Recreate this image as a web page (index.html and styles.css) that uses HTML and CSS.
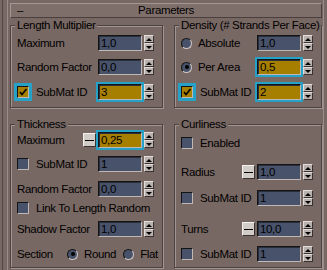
FILE: index.html
```html
<!DOCTYPE html>
<html lang="en">
<head>
  <meta charset="UTF-8" />
  <meta name="viewport" content="width=device-width, initial-scale=1.0"/>
  <title>Parameters</title>
  <link rel="stylesheet" href="styles.css">
</head>
<body>
  <div class="panel">
    <div class="rollout">
      <div class="rollout-head">
        <span class="toggle">–</span>
        <span class="title">Parameters</span>
      </div>

      <div class="groups">
        <!-- Length Multiplier -->
        <div class="group">
          <span class="legend">Length Multiplier</span>
          <div class="row">
            <span class="label">Maximum</span>
            <div class="spin"><span class="field">1,0</span><span class="arrows"><i class="up"></i><i class="down"></i></span></div>
          </div>
          <div class="row sp8">
            <span class="label">Random Factor</span>
            <div class="spin"><span class="field">0,0</span><span class="arrows"><i class="up"></i><i class="down"></i></span></div>
          </div>
          <div class="row sp9">
            <span class="label"><span class="check on active"><svg viewBox="0 0 10 10"><polyline points="2,5 4,7.5 8.5,2"/></svg></span>SubMat ID</span>
            <div class="spin"><span class="field on active">3</span><span class="arrows"><i class="up"></i><i class="down"></i></span></div>
          </div>
        </div>

        <!-- Density -->
        <div class="group right">
          <span class="legend">Density (# Strands Per Face)</span>
          <div class="row">
            <span class="label"><span class="radio"></span>Absolute</span>
            <div class="spin"><span class="field">1,0</span><span class="arrows"><i class="up"></i><i class="down"></i></span></div>
          </div>
          <div class="row sp8">
            <span class="label"><span class="radio on"></span>Per Area</span>
            <div class="spin"><span class="field on active">0,5</span><span class="arrows"><i class="up"></i><i class="down"></i></span></div>
          </div>
          <div class="row sp9">
            <span class="label"><span class="check on active"><svg viewBox="0 0 10 10"><polyline points="2,5 4,7.5 8.5,2"/></svg></span>SubMat ID</span>
            <div class="spin"><span class="field on active">2</span><span class="arrows"><i class="up"></i><i class="down"></i></span></div>
          </div>
        </div>

        <!-- Thickness -->
        <div class="group thick">
          <span class="legend">Thickness</span>
          <div class="row">
            <span class="label">Maximum</span>
            <div class="spin"><span class="minus"></span><span class="field on active">0,25</span><span class="arrows"><i class="up"></i><i class="down"></i></span></div>
          </div>
          <div class="row sp8">
            <span class="label"><span class="check"></span>SubMat ID</span>
            <div class="spin"><span class="field">1</span><span class="arrows"><i class="up"></i><i class="down"></i></span></div>
          </div>
          <div class="row sp9">
            <span class="label">Random Factor</span>
            <div class="spin"><span class="field">0,0</span><span class="arrows"><i class="up"></i><i class="down"></i></span></div>
          </div>
          <div class="row sp3">
            <span class="label"><span class="check"></span>Link To Length Random</span>
          </div>
          <div class="row sp5">
            <span class="label">Shadow Factor</span>
            <div class="spin"><span class="field">1,0</span><span class="arrows"><i class="up"></i><i class="down"></i></span></div>
          </div>
          <div class="row sp9 section">
            <span class="label">Section</span>
            <span class="option"><span class="radio on"></span>Round</span>
            <span class="option"><span class="radio"></span>Flat</span>
          </div>
        </div>

        <!-- Curliness -->
        <div class="group right curl">
          <span class="legend">Curliness</span>
          <div class="row">
            <span class="label"><span class="check"></span>Enabled</span>
          </div>
          <div class="row sp13">
            <span class="label">Radius</span>
            <div class="spin"><span class="minus"></span><span class="field">1,0</span><span class="arrows"><i class="up"></i><i class="down"></i></span></div>
          </div>
          <div class="row sp10">
            <span class="label"><span class="check"></span>SubMat ID</span>
            <div class="spin"><span class="field">1</span><span class="arrows"><i class="up"></i><i class="down"></i></span></div>
          </div>
          <div class="row sp15">
            <span class="label">Turns</span>
            <div class="spin"><span class="minus"></span><span class="field">10,0</span><span class="arrows"><i class="up"></i><i class="down"></i></span></div>
          </div>
          <div class="row sp9">
            <span class="label"><span class="check"></span>SubMat ID</span>
            <div class="spin"><span class="field">1</span><span class="arrows"><i class="up"></i><i class="down"></i></span></div>
          </div>
        </div>
      </div>
    </div>
  </div>
</body>
</html>
```

FILE: styles.css
```css
body {
  margin: 0;
  background: #786864;
  font-family: "Liberation Sans", Arial, sans-serif;
  font-size: 11.5px;
  letter-spacing: -0.35px;
  color: #000;
}

.panel {
  height: 270px;
  margin-left: 2px;
  padding-left: 4px;
  border-left: 1px solid #544845;
  box-sizing: border-box;
}

.rollout {
  width: 317px;
  height: 270px;
  box-sizing: border-box;
  padding: 3px 1px 0 2px;
  border-left: 1px solid #9a8c88;
  border-right: 1px solid #9a8c88;
}

.rollout-head {
  height: 15px;
  box-sizing: border-box;
  display: grid;
  grid-template-columns: 1fr auto 1fr;
  align-items: center;
  background: #7f6f6b;
  border: 1px solid;
  border-color: #a49692 #4a3f3c #4a3f3c #a49692;
  line-height: 13px;
}

.toggle {
  padding-left: 6px;
}

.groups {
  display: grid;
  grid-template-columns: 153px 148px;
  grid-template-rows: 83px 144px;
  column-gap: 11px;
  row-gap: 16px;
  margin-top: 7px;
}

/* etched group box */
.group {
  position: relative;
  border: 1px solid #4e4340;
  box-shadow: inset 1px 1px 0 #a09490, 1px 1px 0 #a09490;
  padding: 9px 8px 0 6px;
}

.group.thick {
  padding-top: 7px;
}

.group.curl {
  padding-top: 10px;
}

.legend {
  position: absolute;
  top: -7px;
  left: 4px;
  padding: 0 2px;
  background: #786864;
  line-height: 13px;
  white-space: nowrap;
}

.row {
  display: flex;
  align-items: center;
  justify-content: space-between;
  height: 16px;
  white-space: nowrap;
}

.sp3 { margin-top: 3px; }
.sp5 { margin-top: 5px; }
.sp8 { margin-top: 8px; }
.sp9 { margin-top: 9px; }
.sp10 { margin-top: 10px; }
.sp13 { margin-top: 13px; }
.sp15 { margin-top: 15px; }

.label {
  display: flex;
  align-items: center;
}

.spin {
  display: flex;
  align-items: center;
}

.field {
  width: 44px;
  height: 16px;
  box-sizing: border-box;
  padding-left: 2px;
  background: #48526a;
  border: 1px solid;
  border-color: #141414 #c0b8b4 #c0b8b4 #141414;
  box-shadow: inset 1px 1px 0 #2a2e3a;
  line-height: 14px;
}

.field.on {
  background: #a67e00;
}

.active {
  outline: 2px solid #26a2c8;
}

.arrows {
  display: flex;
  flex-direction: column;
  width: 10px;
  height: 16px;
  margin-left: 2px;
}

.arrows i {
  flex: 1;
  display: flex;
  align-items: center;
  justify-content: center;
  background: #bab2ae;
  border: 1px solid;
  border-color: #e4dedb #3a3230 #3a3230 #e4dedb;
}

.arrows i::before {
  content: "";
  border-left: 3px solid transparent;
  border-right: 3px solid transparent;
}

.arrows .up::before {
  border-bottom: 3px solid #000;
}

.arrows .down::before {
  border-top: 3px solid #000;
}

.minus {
  display: flex;
  align-items: center;
  justify-content: center;
  width: 13px;
  height: 14px;
  box-sizing: border-box;
  margin-right: 2px;
  background: #d2ccc9;
  border: 1px solid;
  border-color: #f4f0ee #3a3230 #3a3230 #f4f0ee;
}

.minus::before {
  content: "";
  width: 9px;
  height: 1px;
  background: #000;
}

.check {
  display: flex;
  align-items: center;
  justify-content: center;
  flex: none;
  width: 12px;
  height: 12px;
  box-sizing: border-box;
  margin-right: 7px;
  background: #48526a;
  border: 1px solid;
  border-color: #141414 #c0b8b4 #c0b8b4 #141414;
}

.check.on {
  background: #a67e00;
}

.check.active {
  outline-width: 3px;
}

.check svg {
  width: 10px;
  height: 10px;
  fill: none;
  stroke: #000;
  stroke-width: 1.6;
}

.radio {
  position: relative;
  flex: none;
  width: 11px;
  height: 11px;
  box-sizing: border-box;
  margin-right: 6px;
  border-radius: 50%;
  background: #48526a;
  border: 1px solid;
  border-color: #141414 #d0c8c4 #d0c8c4 #141414;
}

.radio.on::after {
  content: "";
  position: absolute;
  top: 2.5px;
  left: 2.5px;
  width: 4px;
  height: 4px;
  border-radius: 50%;
  background: #000;
}

.section {
  justify-content: flex-start;
}

.section > * {
  flex: none;
}

.section .label {
  width: 50px;
}

.option {
  display: flex;
  align-items: center;
  margin-right: 7px;
}
```
